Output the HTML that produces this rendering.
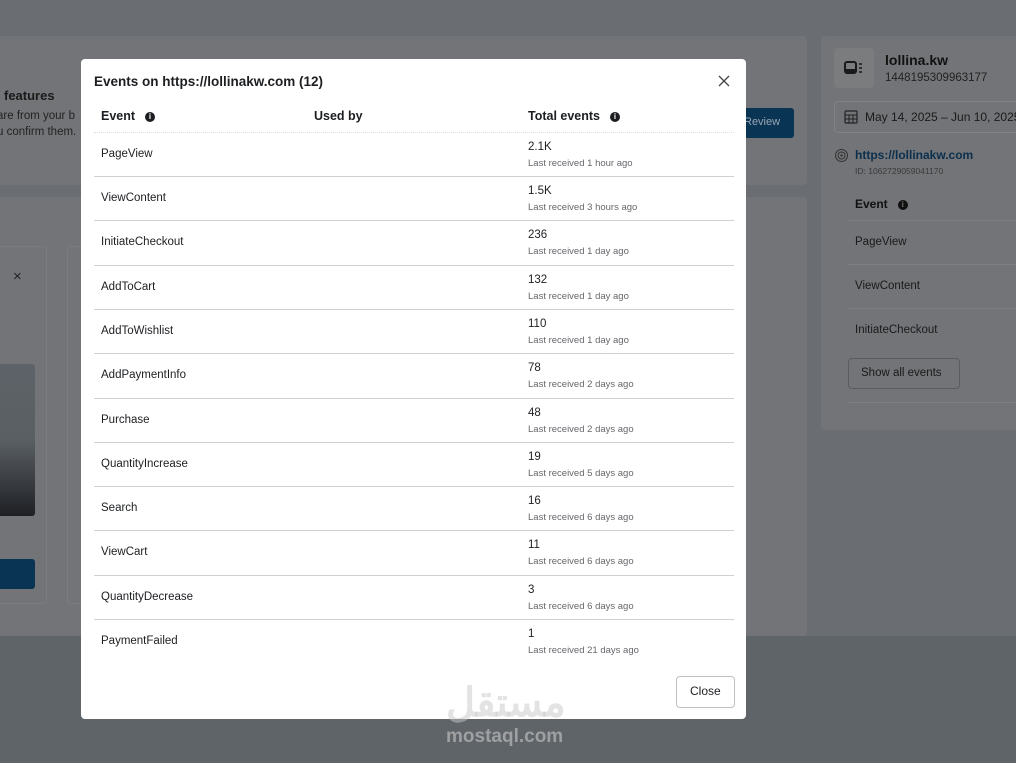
<!DOCTYPE html>
<html><head><meta charset="utf-8"><style>
*{box-sizing:border-box;margin:0;padding:0}
body{width:1016px;height:763px;overflow:hidden;background:#5f6469;font-family:"Liberation Sans",Arial,sans-serif;position:relative;color:#1c1e21}
.abs{position:absolute}
.card{background:#727477;border-radius:4px}
.t{position:absolute;white-space:nowrap}
.modal{position:absolute;left:81px;top:59px;width:665px;height:660px;background:#fff;border-radius:4px}
.row{position:absolute;left:13px;width:640px;height:44px;border-bottom:1px solid #ced0d4}
.row .n{position:absolute;left:7px;top:15px;font-size:11.5px;color:#1c1e21}
.row .v{position:absolute;left:434px;top:8px;font-size:11.5px;color:#1c1e21}
.row .s{position:absolute;left:434px;top:25px;font-size:9.5px;color:#65676b}
.info{display:inline-block;width:10px;height:10px;border-radius:50%;background:#1c1e21;color:#fff;font-size:8px;line-height:10px;text-align:center;font-weight:bold;vertical-align:middle;margin-left:10px}
</style></head><body>
<div class="abs" style="left:0;top:0;width:1016px;height:636px;background:#6a6d71"></div>
<div class="abs card" style="left:-5px;top:36px;width:812px;height:149px"></div>
<div class="abs card" style="left:-5px;top:197px;width:812px;height:439px"></div>
<div class="abs" style="left:-5px;top:246px;width:52px;height:358px;border:1px solid #7a7c7f;border-radius:4px"></div>
<div class="abs" style="left:67px;top:246px;width:20px;height:358px;border:1px solid #7a7c7f;border-radius:4px"></div>
<div class="t" style="left:13px;top:268px;font-size:15px;color:#222">×</div>
<div class="abs" style="left:-5px;top:364px;width:40px;height:152px;background:linear-gradient(#5d6368,#5a5f63 50%,#1e2024);border-radius:3px"></div>
<div class="abs" style="left:-5px;top:559px;width:40px;height:30px;background:#0a3454;border-radius:3px"></div>
<div class="t" style="left:4px;top:88px;font-size:13px;font-weight:bold;color:#1a1a1a">features</div>
<div class="t" style="left:-3px;top:110px;font-size:11.5px;color:#222">are from your b</div>
<div class="t" style="left:-3px;top:126px;font-size:11.5px;color:#222">u confirm them.</div>
<div class="abs" style="left:740px;top:108px;width:54px;height:30px;background:#0a3454;border-radius:3px"></div>
<div class="t" style="left:744px;top:116px;font-size:11px;color:#9aa7b3">Review</div>
<div class="abs card" style="left:821px;top:36px;width:200px;height:394px"></div>
<div class="abs" style="left:834px;top:48px;width:40px;height:40px;background:#7a7c7e;border-radius:4px"></div>
<svg class="abs" style="left:844px;top:61px" width="20" height="14"><rect x="1" y="1" width="11" height="11" rx="2" fill="none" stroke="#1a1a1a" stroke-width="2"/><rect x="1" y="8" width="11" height="3" fill="#1a1a1a"/><path d="M15 3h3M15 7h3M15 11h3" stroke="#1a1a1a" stroke-width="1.5"/></svg>
<div class="t" style="left:885px;top:52px;font-size:14px;font-weight:bold;color:#111">lollina.kw</div>
<div class="t" style="left:885px;top:72px;font-size:11.5px;color:#222">1448195309963177</div>
<div class="abs" style="left:834px;top:101px;width:200px;height:32px;border:1px solid #808285;border-radius:4px"></div>
<svg class="abs" style="left:844px;top:110px" width="14" height="14"><rect x="1" y="1" width="12" height="12" rx="1" fill="none" stroke="#222" stroke-width="1.2"/><path d="M1 5h12M1 9h12M5 5v8M9 5v8" stroke="#222"/></svg>
<div class="t" style="left:865px;top:110px;font-size:12px;color:#1a1a1a">May 14, 2025 – Jun 10, 2025</div>
<svg class="abs" style="left:834px;top:148px" width="15" height="15"><circle cx="7.5" cy="7.5" r="6" fill="none" stroke="#333"/><circle cx="7.5" cy="7.5" r="3.5" fill="none" stroke="#333"/><circle cx="7.5" cy="7.5" r="1.2" fill="#333"/></svg>
<div class="t" style="left:855px;top:148px;font-size:12px;font-weight:bold;color:#0b2f4d">https://lollinakw.com</div>
<div class="t" style="left:855px;top:166px;font-size:8.5px;color:#3a3a3a">ID: 1062729059041170</div>
<div class="t" style="left:855px;top:197px;font-size:12px;font-weight:bold;color:#111">Event<span class="info" style="background:#111;color:#6c6e71">i</span></div>
<div class="abs" style="left:848px;top:220px;width:170px;border-top:1px solid #7d8084"></div>
<div class="t" style="left:855px;top:236px;font-size:11.5px;color:#1a1a1a">PageView</div>
<div class="abs" style="left:848px;top:264px;width:170px;border-top:1px solid #7d8084"></div>
<div class="t" style="left:855px;top:280px;font-size:11.5px;color:#1a1a1a">ViewContent</div>
<div class="abs" style="left:848px;top:308px;width:170px;border-top:1px solid #7d8084"></div>
<div class="t" style="left:855px;top:324px;font-size:11.5px;color:#1a1a1a">InitiateCheckout</div>
<div class="abs" style="left:848px;top:358px;width:112px;height:31px;border:1px solid #5a5c5e;border-radius:4px"></div>
<div class="t" style="left:861px;top:367px;font-size:11.5px;color:#1a1a1a">Show all events</div>
<div class="abs" style="left:848px;top:402px;width:170px;border-top:1px solid #7d8084"></div>

<div class="modal">
<div class="t" style="left:13px;top:15px;font-size:13.5px;font-weight:bold;color:#1c1e21">Events on https://lollinakw.com (12)</div>
<svg class="abs" style="left:637px;top:16px" width="12" height="12"><path d="M1 1L11 11M11 1L1 11" stroke="#444" stroke-width="1.3"/></svg>
<div class="t" style="left:20px;top:50px;font-size:12.5px;font-weight:bold">Event<span class="info">i</span></div>
<div class="t" style="left:233px;top:50px;font-size:12.5px;font-weight:bold">Used by</div>
<div class="t" style="left:447px;top:50px;font-size:12.5px;font-weight:bold">Total events<span class="info">i</span></div>
<div class="abs" style="left:13px;top:73px;width:640px;border-top:1px dotted #dadde1"></div>
<div class="row" style="top:74px;height:44px"><div class="n">PageView</div><div class="v">2.1K</div><div class="s">Last received 1 hour ago</div></div>
<div class="row" style="top:118px"><div class="n">ViewContent</div><div class="v">1.5K</div><div class="s">Last received 3 hours ago</div></div>
<div class="row" style="top:162px;height:45px"><div class="n">InitiateCheckout</div><div class="v">236</div><div class="s">Last received 1 day ago</div></div>
<div class="row" style="top:207px"><div class="n">AddToCart</div><div class="v">132</div><div class="s">Last received 1 day ago</div></div>
<div class="row" style="top:251px"><div class="n">AddToWishlist</div><div class="v">110</div><div class="s">Last received 1 day ago</div></div>
<div class="row" style="top:295px;height:45px"><div class="n">AddPaymentInfo</div><div class="v">78</div><div class="s">Last received 2 days ago</div></div>
<div class="row" style="top:340px"><div class="n">Purchase</div><div class="v">48</div><div class="s">Last received 2 days ago</div></div>
<div class="row" style="top:384px"><div class="n">QuantityIncrease</div><div class="v">19</div><div class="s">Last received 5 days ago</div></div>
<div class="row" style="top:428px"><div class="n">Search</div><div class="v">16</div><div class="s">Last received 6 days ago</div></div>
<div class="row" style="top:472px;height:45px"><div class="n">ViewCart</div><div class="v">11</div><div class="s">Last received 6 days ago</div></div>
<div class="row" style="top:517px"><div class="n">QuantityDecrease</div><div class="v">3</div><div class="s">Last received 6 days ago</div></div>
<div class="row" style="top:561px;border-bottom:none"><div class="n">PaymentFailed</div><div class="v">1</div><div class="s">Last received 21 days ago</div></div>
<div class="abs" style="left:595px;top:617px;width:59px;height:32px;border:1px solid #bcc0c4;border-radius:4px"></div>
<div class="t" style="left:609px;top:625px;font-size:12px;color:#1c1e21">Close</div>
</div>
<div class="t" style="left:446px;top:680px;font-size:40px;font-weight:bold;color:rgba(200,200,200,0.5);font-family:'Liberation Sans','Noto Sans CJK SC',sans-serif">مستقل</div>
<div class="t" style="left:446px;top:726px;font-size:19px;font-weight:bold;color:rgba(200,200,200,0.6)">mostaql.com</div>
</body></html>
